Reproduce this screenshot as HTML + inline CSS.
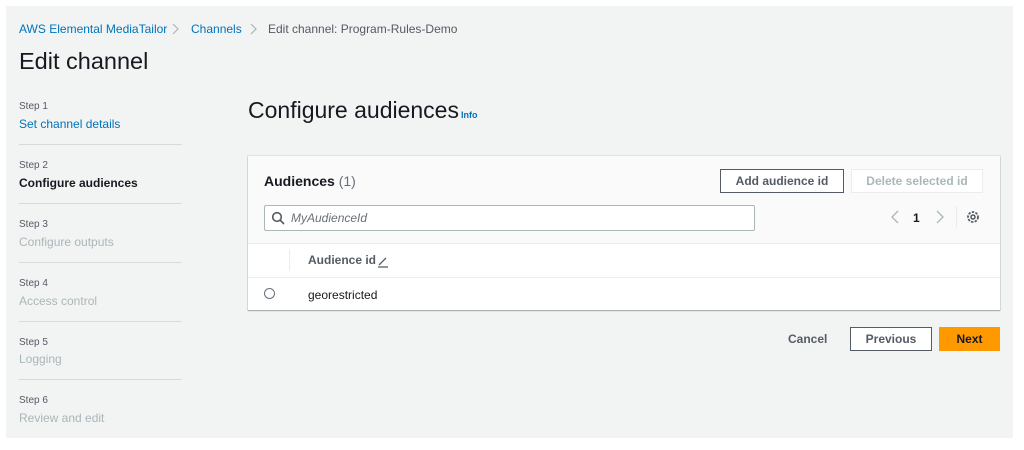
<!DOCTYPE html>
<html><head><style>
body{margin:0;width:1024px;height:450px;background:#fff;font-family:"Liberation Sans",sans-serif;position:relative;overflow:hidden}
#p{position:absolute;left:6px;top:6px;width:1007px;height:432px;background:#f2f3f3}
.a{position:absolute;white-space:nowrap}
.l{color:#0073bb}
.sl{font-size:10px;color:#545b64}
.st{font-size:12px;color:#aab7b8}
.hr{position:absolute;left:19px;width:163px;height:1px;background:#d5dbdb}
.btn{position:absolute;height:24px;box-sizing:border-box;border:1px solid #545b64;background:#fff;font-size:12px;font-weight:bold;color:#545b64;text-align:center;line-height:22px}
</style></head><body>
<div id="p"></div>
<div class="a l" style="left:19px;top:22px;font-size:12px">AWS Elemental MediaTailor</div>
<svg class="a" style="left:171px;top:23px" width="10" height="12" viewBox="0 0 10 12"><path d="M2 1l5 5-5 5" fill="none" stroke="#aab7b8" stroke-width="1.2"/></svg>
<div class="a l" style="left:191px;top:22px;font-size:12px">Channels</div>
<svg class="a" style="left:249px;top:23px" width="10" height="12" viewBox="0 0 10 12"><path d="M2 1l5 5-5 5" fill="none" stroke="#aab7b8" stroke-width="1.2"/></svg>
<div class="a" style="left:268px;top:22px;font-size:12px;color:#545b64">Edit channel: Program-Rules-Demo</div>
<div class="a" style="left:19px;top:48px;font-size:23.5px;color:#16191f">Edit channel</div>

<div class="a sl" style="left:19px;top:101px">Step 1</div>
<div class="a l" style="left:19px;top:117px;font-size:12px">Set channel details</div>
<div class="hr" style="top:144px"></div>
<div class="a sl" style="left:19px;top:160px">Step 2</div>
<div class="a" style="left:19px;top:176px;font-size:12px;font-weight:bold;color:#16191f">Configure audiences</div>
<div class="hr" style="top:203px"></div>
<div class="a sl" style="left:19px;top:219px">Step 3</div>
<div class="a st" style="left:19px;top:235px">Configure outputs</div>
<div class="hr" style="top:262px"></div>
<div class="a sl" style="left:19px;top:278px">Step 4</div>
<div class="a st" style="left:19px;top:294px">Access control</div>
<div class="hr" style="top:321px"></div>
<div class="a sl" style="left:19px;top:337px">Step 5</div>
<div class="a st" style="left:19px;top:352px">Logging</div>
<div class="hr" style="top:379px"></div>
<div class="a sl" style="left:19px;top:395px">Step 6</div>
<div class="a st" style="left:19px;top:411px">Review and edit</div>

<div class="a" style="left:248px;top:97px;font-size:23px;color:#16191f">Configure audiences</div>
<div class="a l" style="left:461px;top:110px;font-size:9px;font-weight:bold">Info</div>

<div class="a" style="left:248px;top:156px;width:752px;height:154px;background:#fff;box-shadow:0 1px 1px rgba(0,28,36,.3),0 0 0 1px #e0e3e3"></div>
<div class="a" style="left:248px;top:156px;width:752px;height:88px;background:#fafafa"></div>
<div class="a" style="left:264px;top:173px;font-size:14px;font-weight:bold;color:#16191f">Audiences <span style="font-weight:normal;color:#687078">(1)</span></div>
<div class="btn" style="left:720px;top:169px;width:124px">Add audience id</div>
<div class="btn" style="left:851px;top:169px;width:132px;border-color:#eaeded;color:#aab7b8">Delete selected id</div>
<div class="a" style="left:264px;top:205px;width:491px;height:26px;box-sizing:border-box;border:1px solid #aab7b8;border-radius:2px;background:#fff"></div>
<svg class="a" style="left:271px;top:211px" width="14" height="14" viewBox="0 0 14 14"><circle cx="6" cy="6" r="4.3" fill="none" stroke="#545b64" stroke-width="1.6"/><path d="M9 9l4 4" stroke="#545b64" stroke-width="1.6"/></svg>
<div class="a" style="left:291px;top:211px;font-size:12px;font-style:italic;color:#687078">MyAudienceId</div>
<svg class="a" style="left:890px;top:210px" width="10" height="14" viewBox="0 0 10 14"><path d="M8 1L2 7l6 6" fill="none" stroke="#aab7b8" stroke-width="1.3"/></svg>
<div class="a" style="left:913px;top:211px;font-size:12px;font-weight:bold;color:#16191f">1</div>
<svg class="a" style="left:935px;top:210px" width="10" height="14" viewBox="0 0 10 14"><path d="M2 1l6 6-6 6" fill="none" stroke="#aab7b8" stroke-width="1.3"/></svg>
<div class="a" style="left:956px;top:206px;width:1px;height:22px;background:#eaeded"></div>
<svg class="a" style="left:966px;top:210px" width="14" height="14" viewBox="0 0 14 14"><circle cx="7" cy="7" r="5" fill="none" stroke="#545b64" stroke-width="1.8" stroke-dasharray="2.4 1.3"/><circle cx="7" cy="7" r="2" fill="none" stroke="#545b64" stroke-width="1.5"/></svg>
<div class="a" style="left:248px;top:243px;width:752px;height:1px;background:#eaeded"></div>
<div class="a" style="left:289px;top:249px;width:1px;height:22px;background:#eaeded"></div>
<div class="a" style="left:308px;top:253px;font-size:12px;font-weight:bold;color:#545b64">Audience id</div>
<svg class="a" style="left:376px;top:254px" width="14" height="14" viewBox="0 0 14 14"><path d="M3 11L10 4M2 13h10" stroke="#545b64" stroke-width="1.3"/></svg>
<div class="a" style="left:248px;top:277px;width:752px;height:1px;background:#eaeded"></div>
<div class="a" style="left:264px;top:288px;width:11px;height:11px;box-sizing:border-box;border:1px solid #687078;border-radius:50%"></div>
<div class="a" style="left:308px;top:288px;font-size:12px;color:#16191f">georestricted</div>

<div class="a" style="left:788px;top:332px;font-size:12px;font-weight:bold;color:#545b64">Cancel</div>
<div class="btn" style="left:850px;top:327px;width:82px">Previous</div>
<div class="btn" style="left:939px;top:327px;width:61px;background:#ff9900;border-color:#ff9900;color:#16191f">Next</div>
</body></html>
